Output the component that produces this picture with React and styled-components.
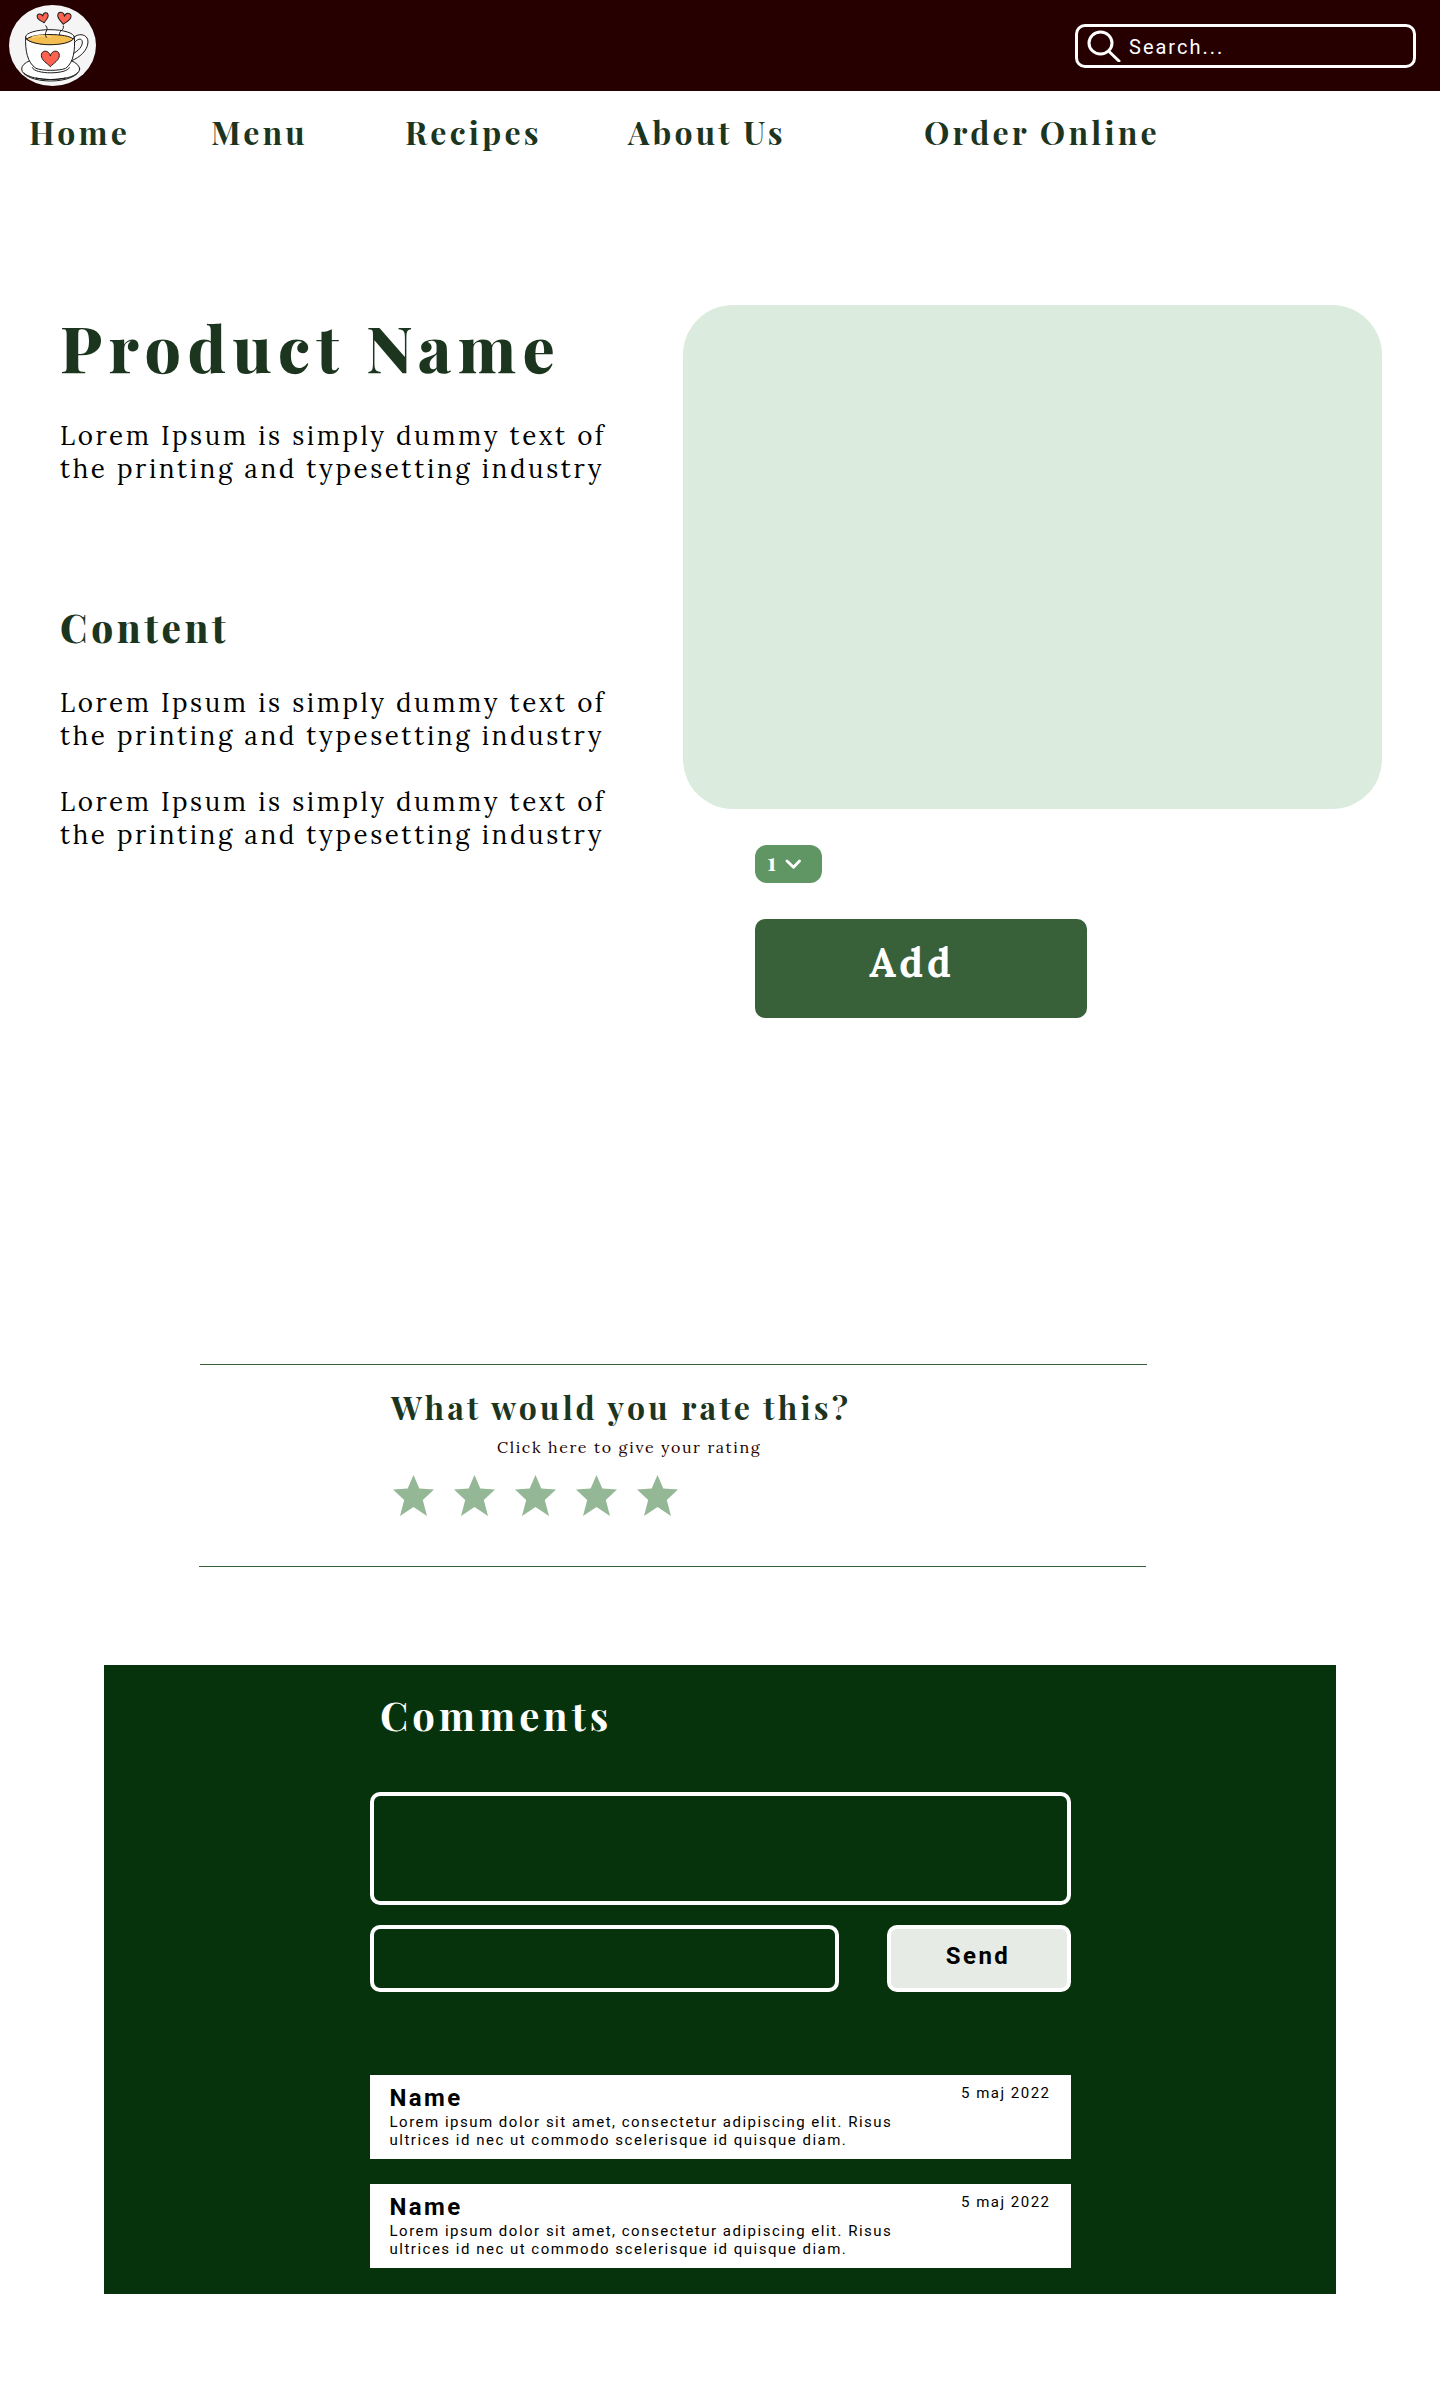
import React from "react";
import styled, { createGlobalStyle } from "styled-components";

const GlobalStyle = createGlobalStyle`
  *, *::before, *::after { box-sizing: border-box; }
  body { margin: 0; background: #fff; }
  h1, h2, h3, p { margin: 0; }
`;

const serif = `"Playfair Display", "Liberation Serif", serif`;
const bodySerif = `"Lora", "Liberation Serif", serif`;
const sans = `Roboto, "Liberation Sans", sans-serif`;

const Page = styled.div`
  width: 1440px;
  height: 2400px;
  overflow: hidden;
  background: #fff;
`;

const Header = styled.header`
  display: flex;
  justify-content: space-between;
  align-items: center;
  height: 91px;
  padding: 0 24px 0 9px;
  background: #260000;
`;

const Logo = styled.svg`
  display: block;
  width: 87px;
  height: 81px;
`;

const SearchBox = styled.label`
  display: flex;
  align-items: center;
  width: 341px;
  height: 44px;
  padding-left: 9px;
  border: 3px solid #fff;
  border-radius: 10px;
  font: 400 20px/24px ${sans};
  letter-spacing: 2px;
  color: #fff;
  svg { display: block; margin-right: 8px; }
  span { margin-top: 2px; }
`;

const Nav = styled.nav`
  display: grid;
  grid-template-columns: 182px 194px 223px 296px auto;
  padding: 21px 0 0 29px;
`;

const NavLink = styled.a`
  font: 700 32px/40px ${serif};
  letter-spacing: 0.1em;
  color: #1c351e;
  white-space: nowrap;
`;

const Product = styled.main`
  display: grid;
  grid-template-columns: 623px 699px;
  height: 713px;
  margin: 153px 0 0 60px;
`;

const Details = styled.div`
  padding-top: 2px;
`;

const ProductName = styled.h1`
  font: 800 64px/80px ${serif};
  letter-spacing: 0.1em;
  color: #1c351e;
  white-space: nowrap;
`;

const ContentTitle = styled.h2`
  margin-top: 118px;
  font: 800 38.4px/48px ${serif};
  letter-spacing: 0.1em;
  color: #1c351e;
`;

const Paragraph = styled.p`
  margin-top: ${(p) => p.$gap}px;
  font: 400 26px/33px ${bodySerif};
  letter-spacing: 0.1em;
  color: #000;
  white-space: nowrap;
`;

const Photo = styled.div`
  height: 504px;
  border-radius: 50px;
  background: #dbebdd;
`;

const Purchase = styled.div`
  display: flex;
  flex-direction: column;
  align-items: flex-start;
  gap: 36px;
  padding: 36px 0 0 72px;
`;

const Quantity = styled.div`
  display: flex;
  align-items: center;
  gap: 9px;
  width: 67px;
  height: 38px;
  padding: 0 0 0 12px;
  border-radius: 12px;
  background: #609564;
  color: #fff;
  font: 700 24px/22px ${serif};
  svg { display: block; }
  span { margin-top: -6px; }
`;

const AddButton = styled.button`
  width: 332px;
  height: 99px;
  padding: 0 18px 12px 0;
  border: 0;
  border-radius: 10px;
  background: #38613a;
  color: #fff;
  font: 700 40px/48px ${bodySerif};
  letter-spacing: 3.8px;
`;

const Rating = styled.section`
  margin: 346px 0 0 199px;
`;

const Rule = styled.hr`
  width: 947px;
  height: 1px;
  margin: 0 0 0 ${(p) => p.$shift || 0}px;
  border: 0;
  background: #38613a;
`;

const RatingBody = styled.div`
  height: 201px;
  padding: 22px 0 0 192px;
`;

const RatingTitle = styled.h2`
  font: 700 32px/40px ${serif};
  letter-spacing: 0.1em;
  color: #1c351e;
`;

const RatingHint = styled.p`
  margin: 0 0 0 106px;
  padding-top: 8px;
  font: 400 16px/24px ${bodySerif};
  letter-spacing: 0.1em;
  color: #260000;
`;

const Stars = styled.div`
  display: flex;
  gap: 20px;
  margin: 16px 0 0 2px;
  svg { display: block; }
`;

const Comments = styled.section`
  width: 1232px;
  height: 629px;
  margin: 98px 0 0 104px;
  padding: 26px 265px 0 266px;
  background: #06330b;
`;

const CommentsTitle = styled.h2`
  padding-left: 10px;
  font: 700 40px/48px ${serif};
  letter-spacing: 0.1em;
  color: #fff;
`;

const MessageField = styled.div`
  height: 113px;
  margin-top: 53px;
  border: 4px solid #fff;
  border-radius: 10px;
`;

const FormRow = styled.div`
  display: flex;
  justify-content: space-between;
  margin-top: 20px;
`;

const NameField = styled.div`
  width: 469px;
  height: 67px;
  border: 4px solid #fff;
  border-radius: 10px;
`;

const SendButton = styled.button`
  width: 184px;
  height: 67px;
  padding: 0 2px 5px 0;
  border: 4px solid #fff;
  border-radius: 10px;
  background: #e6ebe5;
  color: #000;
  font: 700 24px/28px ${sans};
  letter-spacing: 2.4px;
`;

const CommentList = styled.div`
  display: flex;
  flex-direction: column;
  gap: 25px;
  margin-top: 83px;
`;

const Comment = styled.article`
  display: flex;
  justify-content: space-between;
  height: 84px;
  padding: 9px 20.5px 0 19.5px;
  background: #fff;
  font-family: ${sans};
  color: #000;
  white-space: nowrap;
`;

const Author = styled.h3`
  font: 700 24px/28px ${sans};
  letter-spacing: 2.4px;
`;

const CommentText = styled.p`
  padding-top: 1px;
  font: 400 15px/18px ${sans};
  letter-spacing: 1.5px;
`;

const CommentDate = styled.time`
  font: 400 15px/18px ${sans};
  letter-spacing: 1.5px;
`;

const heart = "M0 9 C-5 -10 -27 -8 -27 8 C-27 23 -10 31 0 42 C10 31 27 23 27 8 C27 -8 5 -10 0 9 Z";

function CupLogo() {
  return (
    <Logo viewBox="27 17 261 243" preserveAspectRatio="none">
      <ellipse cx="157.500" cy="138.500" rx="130.500" ry="121.500" fill="#f5f5f5" />
      <g stroke="#1b1b1b" strokeWidth="3" strokeLinecap="round" strokeLinejoin="round">
        <ellipse cx="152" cy="209" rx="87" ry="36" fill="#fff" />
        <path d="M72 221 C94 247 211 248 233 220 M108 236 Q151 246 196 236" fill="none" />
        <path d="M97 205 C103 226 201 226 208 205" fill="#fff" />
        <path d="M219 117 C232 99 265 103 264 128 C263 154 239 174 213 185 L218 164 C236 154 248 141 247 127 C246 117 234 116 224 129" fill="#fff" />
        <path d="M77 113 C75 153 82 190 108 207 C128 215 177 215 197 207 C221 190 226 151 223 113 Z" fill="#fff" />
        <ellipse cx="150" cy="113" rx="73" ry="22" fill="#fff" />
        <path d="M80 119 C99 101 201 101 220 119 C201 142 99 142 80 119Z" fill="#f4bd50" />
        <path d="M97 114 Q123 106 151 112" fill="none" stroke="#f8d177" strokeWidth="6" />
        <path d="M139 114 C128 97 151 92 137 79 M179 107 C174 93 194 95 190 80" fill="none" />
        <path d={heart} transform="translate(151 160)" fill="#fb6350" />
        <path d={heart} transform="translate(127 45) rotate(-12) scale(.62)" strokeWidth="4.500" fill="#fb6350" />
        <path d={heart} transform="translate(194 44) rotate(8) scale(.74)" strokeWidth="4" fill="#fb6350" />
      </g>
    </Logo>
  );
}

const navItems = ["Home", "Menu", "Recipes", "About Us", "Order Online"];

function Lorem({ gap }) {
  return (
    <Paragraph $gap={gap}>
      Lorem Ipsum is simply dummy text of
      <br />
      the printing and typesetting industry
    </Paragraph>
  );
}

function CommentCard() {
  return (
    <Comment>
      <div>
        <Author>Name</Author>
        <CommentText>
          Lorem ipsum dolor sit amet, consectetur adipiscing elit. Risus
          <br />
          ultrices id nec ut commodo scelerisque id quisque diam.
        </CommentText>
      </div>
      <CommentDate>5 maj 2022</CommentDate>
    </Comment>
  );
}

export default function App() {
  return (
    <Page>
      <GlobalStyle />
      <Header>
        <CupLogo />
        <SearchBox>
          <svg width="34" height="32" viewBox="0 0 34 32" fill="none" stroke="#fff" strokeWidth="3" strokeLinecap="round">
            <ellipse cx="13.500" cy="13" rx="11.500" ry="11" />
            <path d="M21.500 21 L32 31" />
          </svg>
          <span>Search...</span>
        </SearchBox>
      </Header>
      <Nav>
        {navItems.map((label) => (
          <NavLink key={label}>{label}</NavLink>
        ))}
      </Nav>
      <Product>
        <Details>
          <ProductName>Product Name</ProductName>
          <Lorem gap={32} />
          <ContentTitle>Content</ContentTitle>
          <Lorem gap={35} />
          <Lorem gap={33} />
        </Details>
        <div>
          <Photo />
          <Purchase>
            <Quantity>
              <span>1</span>
              <svg width="16" height="10" viewBox="0 0 16 10" fill="none" stroke="#fff" strokeWidth="2.800" strokeLinecap="round" strokeLinejoin="round">
                <path d="M2 2 L8.500 8.300 L14.500 2" />
              </svg>
            </Quantity>
            <AddButton>Add</AddButton>
          </Purchase>
        </div>
      </Product>
      <Rating>
        <Rule $shift={1} />
        <RatingBody>
          <RatingTitle>What would you rate this?</RatingTitle>
          <RatingHint>Click here to give your rating</RatingHint>
          <Stars>
            {[1, 2, 3, 4, 5].map((n) => (
              <svg key={n} width="41" height="41" viewBox="0 0 41 41">
                <path d="M20.500 0 L26.300 13.500 L41 14.500 L29.800 25 L34 41 L20.500 32 L7 41 L11.200 25 L0 14.500 L14.700 13.500Z" fill="#94b795" />
              </svg>
            ))}
          </Stars>
        </RatingBody>
        <Rule />
      </Rating>
      <Comments>
        <CommentsTitle>Comments</CommentsTitle>
        <MessageField />
        <FormRow>
          <NameField />
          <SendButton>Send</SendButton>
        </FormRow>
        <CommentList>
          <CommentCard />
          <CommentCard />
        </CommentList>
      </Comments>
    </Page>
  );
}
